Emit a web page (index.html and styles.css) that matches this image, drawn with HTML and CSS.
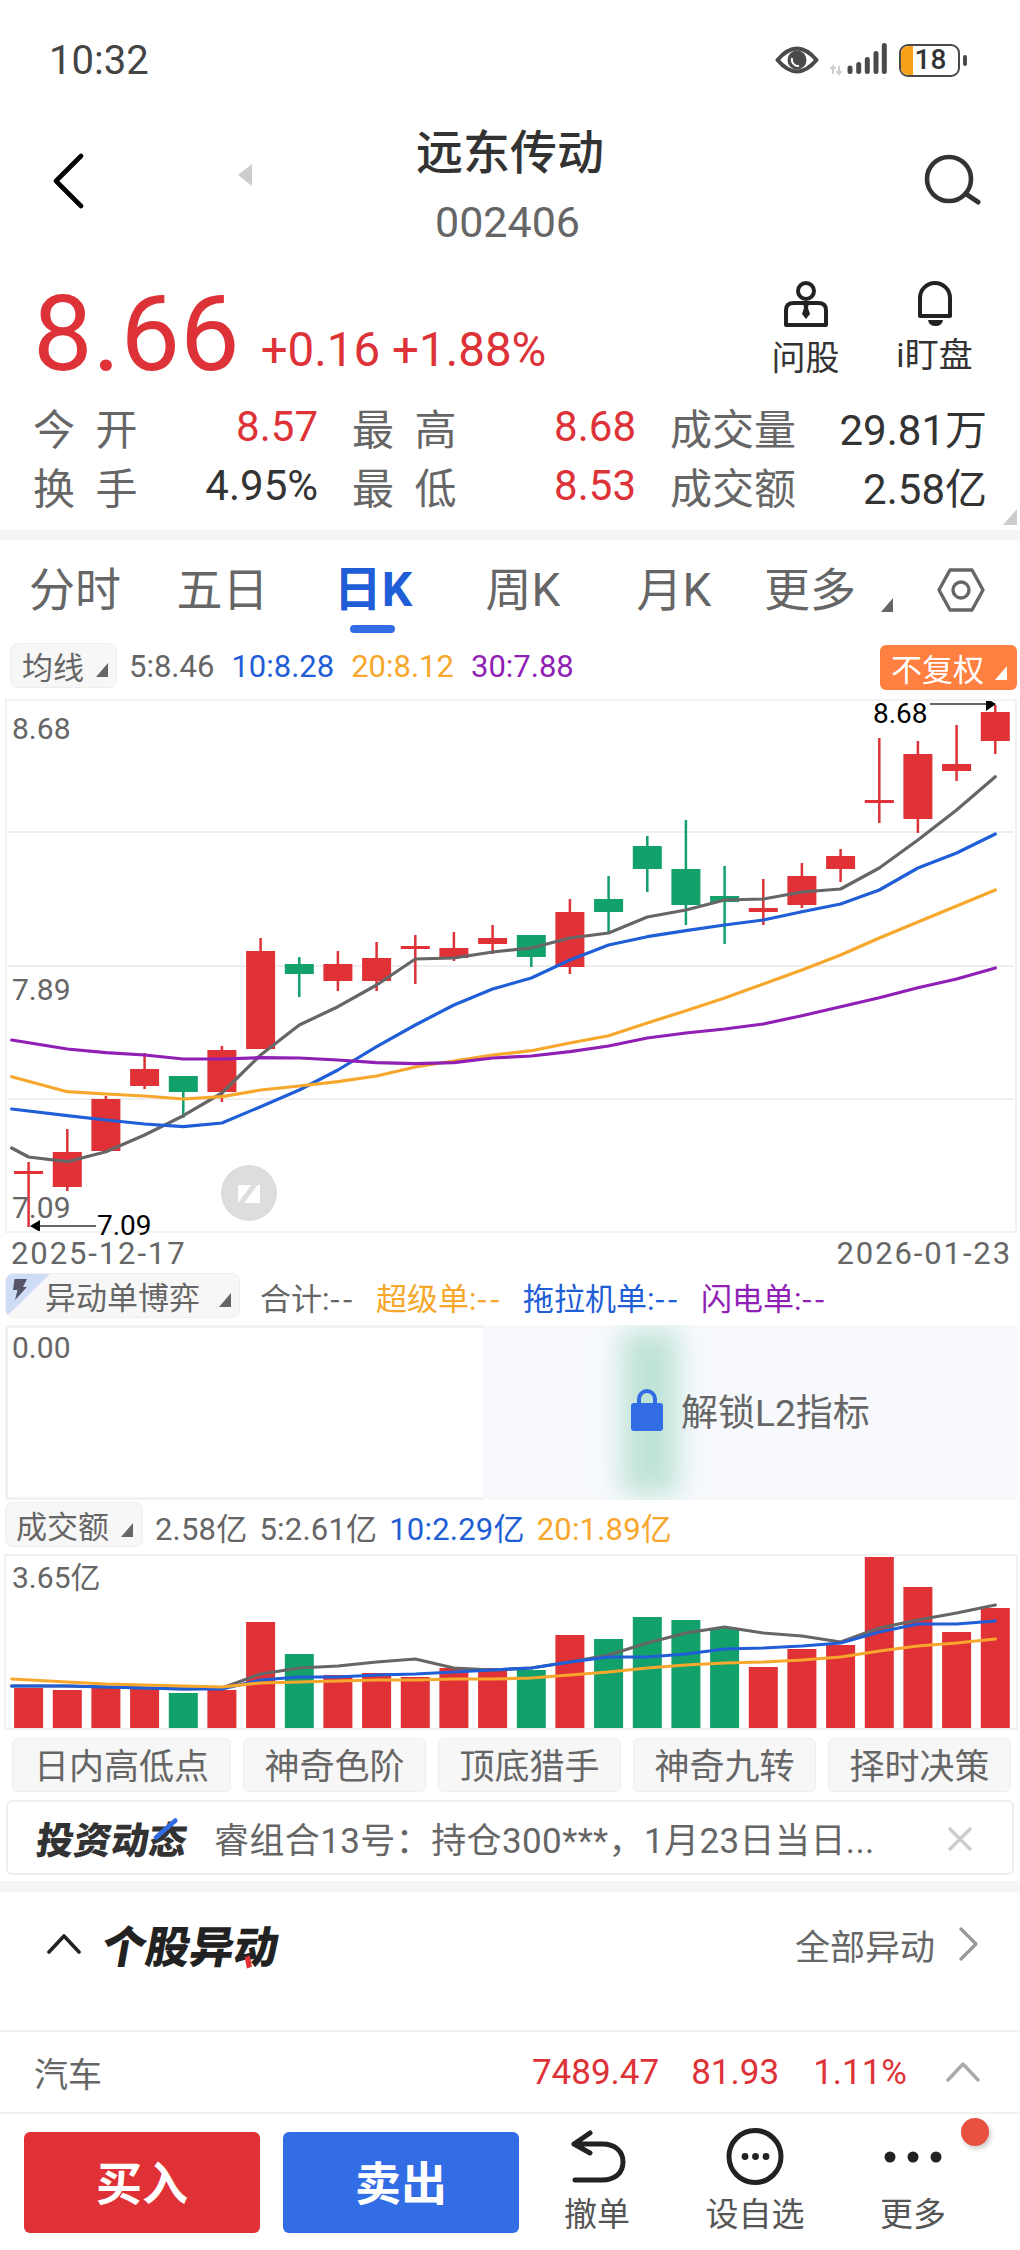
FILE: index.html
```html
<!DOCTYPE html>
<html lang="zh">
<head>
<meta charset="utf-8">
<title>远东传动 002406</title>
<link rel="stylesheet" href="styles.css">
</head>
<body>
<div class="app">
  <div class="status">
    <span class="time">10:32</span>
    <div class="status-icons">
      <svg class="ico-eye" viewBox="0 0 44 30" width="44" height="30"><path d="M2.5 15Q22-8 41.500 15Q22 38 2.500 15Z" fill="none" stroke="#4a4a4a" stroke-width="4" stroke-linejoin="round"/><circle cx="22" cy="15" r="9.500" fill="#4a4a4a"/><path d="M17 13a6.500 6.500 0 0 0 7 8" fill="none" stroke="#fff" stroke-width="2"/></svg>
      <svg class="ico-signal" viewBox="0 0 60 36" width="60" height="36"><path d="M5 32V24M2.500 27L5 24L7.500 27M11 24V32M8.500 29L11 32L13.500 29" fill="none" stroke="#cfcfcf" stroke-width="2"/><path d="M22 26V29.500M30.700 22.500V29.500M39.300 17.500V29.500M48 11.500V29.500M56.300 3.500V29.500" stroke="#4a4a4a" stroke-width="5" stroke-linecap="round"/></svg>
      <div class="battery"><span class="battery-fill"></span><span class="battery-num">18</span></div>
      <span class="battery-nub"></span>
    </div>
  </div>

  <header class="nav">
    <svg class="back" viewBox="0 0 36 56" width="36" height="56"><path d="M31 3L6 28L31 53" fill="none" stroke="#000" stroke-width="4.600" stroke-linecap="round" stroke-linejoin="round"/></svg>
    <span class="prev-arrow"></span>
    <div class="nav-title">
      <div class="name">远东传动</div>
      <div class="code">002406</div>
    </div>
    <svg class="search" viewBox="0 0 58 52" width="58" height="52"><circle cx="25" cy="25" r="22" fill="none" stroke="#333" stroke-width="4.600"/><path d="M42 40L54 48" stroke="#333" stroke-width="5" stroke-linecap="round"/></svg>
  </header>

  <section class="quote">
    <span class="price">8.66</span>
    <span class="change">+0.16 +1.88%</span>
    <div class="quick">
      <div class="quick-item">
        <svg viewBox="0 0 44 46" width="44" height="46"><circle cx="22" cy="10" r="8" fill="none" stroke="#222" stroke-width="4"/><path d="M2 44V29Q2 22 10 22H34Q42 22 42 29V44Z" fill="none" stroke="#222" stroke-width="4" stroke-linejoin="round"/><path d="M19 22H25L24 27L26 33L22 38L18 33L20 27Z" fill="#222"/></svg>
        <span>问股</span>
      </div>
      <div class="quick-item quick-bell">
        <svg viewBox="0 0 40 46" width="40" height="46"><path d="M5 35V17a15 15 0 0 1 30 0V35Z" fill="none" stroke="#222" stroke-width="4" stroke-linejoin="round"/><path d="M13 39H28Q27 45 20.500 45Q14 45 13 39Z" fill="#222"/></svg>
        <span>i盯盘</span>
      </div>
    </div>
  </section>

  <section class="stats">
    <div class="stat"><span class="lab">今 开</span><span class="red">8.57</span></div>
    <div class="stat"><span class="lab">最 高</span><span class="red">8.68</span></div>
    <div class="stat"><span class="lab">成交量</span><span>29.81万</span></div>
    <div class="stat"><span class="lab">换 手</span><span>4.95%</span></div>
    <div class="stat"><span class="lab">最 低</span><span class="red">8.53</span></div>
    <div class="stat"><span class="lab">成交额</span><span>2.58亿</span></div>
    <span class="corner"></span>
  </section>
  <div class="band band-a"></div>

  <nav class="tabs">
    <span class="tab">分时</span>
    <span class="tab">五日</span>
    <span class="tab active">日K</span>
    <span class="tab">周K</span>
    <span class="tab">月K</span>
    <span class="tab">更多</span>
    <span class="tri tri-more"></span>
    <svg class="hex" viewBox="0 0 48 44" width="48" height="44"><path d="M13 2H35L46 22L35 42H13L2 22Z" fill="none" stroke="#666" stroke-width="3.400" stroke-linejoin="round"/><circle cx="24" cy="22" r="8" fill="none" stroke="#666" stroke-width="3.400"/></svg>
  </nav>

  <div class="ind-row">
    <span class="chip chip-ma">均线<i class="tri"></i></span>
    <span class="val g">5:8.46</span><span class="val b">10:8.28</span><span class="val o">20:8.12</span><span class="val p">30:7.88</span>
    <span class="adj">不复权<i class="tri tri-white"></i></span>
  </div>

  <div class="chart">
    <svg class="plot" viewBox="5 699 1012 534" width="1012" height="534">
      <path class="grid" d="M8 832H1014M8 966H1014M8 1099H1014"/>
      <path class="wick-r" d="M28.600 1162V1227M67.300 1129V1191M105.900 1096V1152M144.600 1053V1089M221.900 1046V1102M260.600 938V1049M337.900 951V991M376.600 942V991M415.300 935V984M453.900 932V961M492.600 925V954M569.900 899V974M763.300 879V925M801.900 863V908M840.600 849V882M879.300 738V823M917.900 741V833M956.600 725V781M995.300 705V754"/>
      <path class="wick-g" d="M183.300 1076V1118M299.300 957V997M531.300 935V967M608.600 876V933M647.300 836V892M685.900 820V925M724.600 866V944"/>
      <path class="body-r" d="M14.100 1171h29v3h-29zM52.800 1152h29v35h-29zM91.400 1099h29v52h-29zM130.100 1069h29v17h-29zM207.400 1050h29v42h-29zM246.100 951h29v98h-29zM323.400 964h29v17h-29zM362.100 958h29v23h-29zM400.800 946h29v3h-29zM439.400 948h29v10h-29zM478.100 938h29v6h-29zM555.400 912h29v55h-29zM748.800 908h29v4h-29zM787.400 876h29v29h-29zM826.100 856h29v13h-29zM864.800 800h29v3h-29zM903.400 754h29v65h-29zM942.100 764h29v7h-29zM980.800 712h29v29h-29z"/>
      <path class="body-g" d="M168.800 1076h29v16h-29zM284.800 964h29v10h-29zM516.800 935h29v22h-29zM594.100 899h29v13h-29zM632.800 846h29v23h-29zM671.400 869h29v36h-29zM710.100 896h29v6h-29z"/>
      <polyline class="ma ma5" points="11.700,1148 28.600,1157 67.300,1161.700 105.900,1151.700 144.600,1135 183.300,1115.700 221.900,1093 260.600,1055 299.300,1025 337.900,1006.700 376.600,985 415.300,959 453.900,958 492.600,952 531.300,948 569.900,938 608.600,933 647.300,917 685.900,910 724.600,900 763.300,899 801.900,892 840.600,889 879.300,868 917.900,840 956.600,810 995.300,776.700"/>
      <polyline class="ma ma10" points="11.700,1109 67.300,1115.700 105.900,1120 144.600,1124 183.300,1126.700 221.900,1123 260.600,1106.700 299.300,1090 337.900,1070 376.600,1046.700 415.300,1025 453.900,1005 492.600,989 531.300,978 569.900,960 608.600,945 647.300,936.700 685.900,930.700 724.600,925 763.300,920 801.900,911.700 840.600,904 879.300,890 917.900,868 956.600,853 995.300,834"/>
      <polyline class="ma ma20" points="11.700,1076.700 67.300,1091.700 105.900,1094 144.600,1096 183.300,1099 221.900,1096.700 260.600,1090 299.300,1086 337.900,1081.700 376.600,1076 415.300,1067 453.900,1061 492.600,1055 531.300,1050.700 569.900,1043 608.600,1035.700 647.300,1023 685.900,1010.700 724.600,998 763.300,984 801.900,970 840.600,955 879.300,938 917.900,922 956.600,906 995.300,890"/>
      <polyline class="ma ma30" points="11.700,1040 67.300,1049 105.900,1052.700 144.600,1055 183.300,1059 221.900,1059 260.600,1057.700 299.300,1058 337.900,1060 376.600,1062.700 415.300,1063.700 453.900,1062.700 492.600,1058 531.300,1056 569.900,1051.700 608.600,1046 647.300,1038 685.900,1033 724.600,1029 763.300,1024 801.900,1015.700 840.600,1006.700 879.300,997.700 917.900,987.700 956.600,979 995.300,968"/>
      <path class="mark-line" d="M930 704H988M39 1226H96"/>
      <path class="mark-head" d="M986 698L996 704L986 711ZM40 1220L30 1226L40 1232Z"/>
    </svg>
    <span class="axis axis-hi">8.68</span>
    <span class="axis axis-mid">7.89</span>
    <span class="axis axis-lo">7.09</span>
    <span class="mark mark-hi">8.68</span>
    <span class="mark mark-lo">7.09</span>
    <svg class="eraser" viewBox="0 0 56 56" width="56" height="56"><circle cx="28" cy="28" r="28" fill="#ddd"/><path d="M17 20H39V38H17Z" fill="#fff"/><path d="M34 15L38 18L21 41L17 38Z" fill="#ddd"/></svg>
  </div>

  <div class="dates"><span>2025-12-17</span><span>2026-01-23</span></div>

  <div class="ind-row row-l2">
    <span class="chip chip-l2">
      <svg class="bolt" viewBox="0 0 44 43" width="44" height="43"><path d="M0 0H44L0 43Z" fill="#cfdcf5"/><path d="M8.500 5H21L17 13H21L9 26L11.500 16H7Z" fill="#556"/></svg>
      异动单博弈<i class="tri"></i>
    </span>
    <span class="val g">合计:<span class="dash">--</span></span><span class="val o">超级单:<span class="dash">--</span></span><span class="val b">拖拉机单:<span class="dash">--</span></span><span class="val p">闪电单:<span class="dash">--</span></span>
  </div>

  <div class="l2-panel">
    <span class="axis axis-zero">0.00</span>
    <div class="l2-lock">
      <span class="glow"></span>
      <svg viewBox="0 0 32 42" width="32" height="42"><path d="M8 18V10a8 8 0 0 1 16 0V18" fill="none" stroke="#336de6" stroke-width="4"/><rect x="0" y="14" width="32" height="28" rx="3" fill="#336de6"/></svg>
      <span class="l2-text">解锁L2指标</span>
    </div>
  </div>

  <div class="ind-row row-vol">
    <span class="chip chip-vol">成交额<i class="tri"></i></span>
    <span class="val g">2.58亿</span><span class="val g">5:2.61亿</span><span class="val b">10:2.29亿</span><span class="val o">20:1.89亿</span>
  </div>

  <div class="vol">
    <svg class="plot" viewBox="5 1555 1012 174" width="1012" height="174">
      <path class="body-r" d="M14.100 1688h29v40h-29zM52.800 1690h29v38h-29zM91.400 1688h29v40h-29zM130.100 1689h29v39h-29zM207.400 1690h29v38h-29zM246.100 1622h29v106h-29zM323.400 1675h29v53h-29zM362.100 1673h29v55h-29zM400.800 1677h29v51h-29zM439.400 1668h29v60h-29zM478.100 1668h29v60h-29zM555.400 1635h29v93h-29zM748.800 1667h29v61h-29zM787.400 1649h29v79h-29zM826.100 1645h29v83h-29zM864.800 1557h29v171h-29zM903.400 1587h29v141h-29zM942.100 1632h29v96h-29zM980.800 1608h29v120h-29z"/>
      <path class="body-g" d="M168.800 1693h29v35h-29zM284.800 1654h29v74h-29zM516.800 1670h29v58h-29zM594.100 1639h29v89h-29zM632.800 1617h29v111h-29zM671.400 1620h29v108h-29zM710.100 1628h29v100h-29z"/>
      <polyline class="ma ma5" points="11.700,1686 67.300,1686 105.900,1687 144.600,1688 183.300,1689 221.900,1688 260.600,1674 299.300,1668 337.900,1666 376.600,1662 415.300,1659 453.900,1668 492.600,1670 531.300,1668 569.900,1662 608.600,1655 647.300,1643 685.900,1633 724.600,1627 763.300,1633 801.900,1636 840.600,1642 879.300,1628 917.900,1620 956.600,1613 995.300,1605"/>
      <polyline class="ma ma10" points="11.700,1686 67.300,1686 105.900,1687 144.600,1688 183.300,1689 221.900,1689 260.600,1680 299.300,1677 337.900,1677 376.600,1675 415.300,1674 453.900,1672 492.600,1670 531.300,1668 569.900,1662 608.600,1657 647.300,1657 685.900,1654 724.600,1649 763.300,1648 801.900,1646 840.600,1643 879.300,1632 917.900,1624 956.600,1624 995.300,1621"/>
      <polyline class="ma ma20" points="11.700,1679 67.300,1682 105.900,1684 144.600,1685 183.300,1686 221.900,1687 260.600,1683 299.300,1682 337.900,1681 376.600,1680 415.300,1680 453.900,1679 492.600,1679 531.300,1678 569.900,1675 608.600,1672 647.300,1668 685.900,1665 724.600,1663 763.300,1662 801.900,1660 840.600,1657 879.300,1651 917.900,1646 956.600,1643 995.300,1639"/>
    </svg>
    <span class="axis axis-vol">3.65亿</span>
  </div>

  <div class="tools">
    <span class="tool tool-wide">日内高低点</span>
    <span class="tool">神奇色阶</span>
    <span class="tool">顶底猎手</span>
    <span class="tool">神奇九转</span>
    <span class="tool">择时决策</span>
  </div>

  <div class="news">
    <span class="news-logo">投资动态</span>
    <span class="news-text">睿组合13号：持仓300***，1月23日当日...</span>
    <svg class="news-x" viewBox="0 0 26 26" width="26" height="26"><path d="M2 2L24 24M24 2L2 24" stroke="#ccc" stroke-width="3.400"/></svg>
  </div>
  <div class="band band-b"></div>

  <div class="sec-head">
    <svg viewBox="0 0 34 20" width="34" height="20"><path d="M2 18L17 2L32 18" fill="none" stroke="#222" stroke-width="3.600" stroke-linecap="round" stroke-linejoin="round"/></svg>
    <span class="sec-title">个股异动</span>
    <span class="sec-all">全部异动</span>
    <svg viewBox="0 0 20 34" width="20" height="34"><path d="M2 2L17 17L2 32" fill="none" stroke="#999" stroke-width="3.200" stroke-linecap="round" stroke-linejoin="round"/></svg>
  </div>

  <div class="sector">
    <span class="sector-name">汽车</span>
    <span class="sector-a red">7489.47</span>
    <span class="sector-b red">81.93</span>
    <span class="sector-c red">1.11%</span>
    <svg viewBox="0 0 34 20" width="34" height="20"><path d="M2 18L17 2L32 18" fill="none" stroke="#aaa" stroke-width="3.400" stroke-linecap="round" stroke-linejoin="round"/></svg>
  </div>

  <footer class="bottom">
    <span class="btn btn-buy">买入</span>
    <span class="btn btn-sell">卖出</span>
    <div class="act act-a">
      <svg viewBox="0 0 60 60" width="60" height="60"><path d="M23 7L7 18L23 27M7 18H35C49 18 56 26 56 36C56 47 48 54 35 54H8" fill="none" stroke="#222" stroke-width="5" stroke-linecap="round" stroke-linejoin="round"/></svg>
      <span>撤单</span>
    </div>
    <div class="act act-b">
      <svg viewBox="0 0 60 60" width="60" height="60"><circle cx="30" cy="30.500" r="26" fill="none" stroke="#222" stroke-width="5"/><circle cx="20" cy="30.500" r="3.400" fill="#222"/><circle cx="30.500" cy="30.500" r="3.400" fill="#222"/><circle cx="41" cy="30.500" r="3.400" fill="#222"/></svg>
      <span>设自选</span>
    </div>
    <div class="act act-c">
      <svg viewBox="0 0 60 60" width="60" height="60"><circle cx="7" cy="31" r="5.500" fill="#222"/><circle cx="30" cy="31" r="5.500" fill="#222"/><circle cx="53" cy="31" r="5.500" fill="#222"/></svg>
      <span>更多</span>
    </div>
    <span class="red-dot"></span>
  </footer>
</div>
</body>
</html>
```
FILE: styles.css
```css
* { box-sizing: border-box; }
html, body { margin: 0; padding: 0; background: #fff; }
body { font-family: Roboto, "Noto Sans CJK SC", sans-serif; color: #333; }
.app { width: 1020px; height: 2250px; overflow: hidden; position: relative; background: #fff; }
.red { color: #dd3237; }
.g { color: #666; }
.b { color: #1f5ed6; }
.o { color: #f7a72c; }
.p { color: #8f1fb5; }

/* status bar */
.status { height: 120px; display: flex; align-items: center; justify-content: space-between; padding: 0 53px 0 49px; }
.time { font-size: 40px; color: #444; }
.status-icons { display: flex; align-items: center; }
.ico-eye { margin-right: 9px; }
.ico-signal { margin-right: 11px; }
.battery { position: relative; width: 61px; height: 33px; border: 2.5px solid #4a4a4a; border-radius: 9px; overflow: hidden; display: flex; align-items: center; justify-content: center; }
.battery-fill { position: absolute; left: 0; top: 0; bottom: 0; width: 12px; background: #f9a01b; }
.battery-num { position: relative; font-size: 28px; line-height: 1; color: #333; margin-left: 2px; font-weight: 500; }
.battery-nub { width: 4px; height: 11px; margin-left: 3px; background: #4a4a4a; border-radius: 2px; }

/* nav */
.nav { position: relative; height: 150px; }
.nav-title { text-align: center; }
.name { font-size: 47px; line-height: 66px; color: #333; font-weight: 500; }
.code { font-size: 43px; line-height: 56px; margin-top: 8px; padding-right: 5px; color: #666; }
.back { position: absolute; left: 50px; top: 33px; }
.prev-arrow { position: absolute; left: 238px; top: 44px; border-style: solid; border-width: 11px 14px 11px 0; border-color: transparent #ccc transparent transparent; }
.search { position: absolute; left: 924px; top: 34px; }

/* quote */
.quote { height: 127px; position: relative; display: flex; align-items: flex-start; padding-left: 33px; }
.price { font-size: 106px; line-height: 128px; color: #dd3237; }
.change { font-size: 47.500px; line-height: 56px; color: #dd3237; margin: 52px 0 0 21px; }
.quick { position: absolute; left: 753px; top: 11px; display: flex; }
.quick-item { width: 105px; margin-right: 24px; display: flex; flex-direction: column; align-items: center; font-size: 34px; color: #333; }
.quick-item span { line-height: 46px; margin-top: 8px; }
.quick-bell span { margin-top: 5px; }

/* stats */
.stats { position: relative; height: 118px; padding: 0 33px; display: grid; grid-template-columns: 285px 284px 317px; column-gap: 34px; grid-auto-rows: 59px; font-size: 42px; color: #333; }
.stat { display: flex; justify-content: space-between; align-items: center; }
.lab { color: #666; font-size: 42px; word-spacing: 10px; }
.corner { position: absolute; right: 3px; bottom: -10px; border-style: solid; border-width: 0 0 16px 14px; border-color: transparent transparent #ccc transparent; }
.band { background: #f5f5f5; }
.band-a { height: 10px; margin-top: 15px; }
.band-b { height: 11px; margin-top: 6px; }

/* tabs */
.tabs { height: 100px; position: relative; display: grid; grid-template-columns: 150px 145px 156px 144px 158px 114px; align-items: center; font-size: 46px; color: #666; }
.tab { text-align: center; line-height: 100px; }
.active { color: #1f5ed6; font-weight: 700; font-size: 48px; }
.active::after { content: ""; position: absolute; left: 350px; top: 85px; width: 45px; height: 8px; background: #336de6; border-radius: 4px; }
.tri-more { position: absolute; left: 881px; top: 58px; }
.hex { position: absolute; left: 937px; top: 28px; }
.tri { display: inline-block; border-style: solid; border-width: 0 0 14px 12px; border-color: transparent transparent #666 transparent; }
.tri-white { border-color: transparent transparent #fff transparent; }

/* indicator rows */
.ind-row { height: 59px; display: flex; align-items: center; gap: 17px; padding-left: 10px; font-size: 31px; position: relative; padding-bottom: 9px; }
.val { padding-top: 3px; }
.dash { font-family: "Noto Sans CJK SC", sans-serif; letter-spacing: 2px; }
.chip { height: 45px; display: flex; align-items: center; background: #f7f7f7; border: 1px solid #eee; border-radius: 8px; color: #666; position: relative; }
.chip-ma { width: 107px; padding-left: 11px; margin-right: -5px; }
.chip .tri { margin-left: 12px; margin-top: 10px; }
.adj { position: absolute; left: 880px; top: 5px; width: 137px; height: 45px; background: #ff8040; color: #fff; border-radius: 6px; display: flex; align-items: center; padding-left: 11px; font-size: 31px; }
.adj .tri { margin-left: 11px; margin-top: 10px; }

/* chart */
.chart { position: relative; margin-left: 5px; width: 1012px; height: 534px; outline: 2px solid #f2f2f2; outline-offset: -2px; }
.plot { display: block; }
.grid { stroke: #eee; stroke-width: 2; fill: none; }
.wick-r { stroke: #dd3237; stroke-width: 2.500; fill: none; }
.wick-g { stroke: #12a06b; stroke-width: 2.500; fill: none; }
.body-r { fill: #e03136; }
.body-g { fill: #12a06b; }
.ma { fill: none; stroke-width: 3.200; stroke-linejoin: round; stroke-linecap: round; }
.ma5 { stroke: #666; }
.ma10 { stroke: #1f5ed6; }
.ma20 { stroke: #f7a72c; }
.ma30 { stroke: #8f1fb5; }
.mark-line { stroke: #666; stroke-width: 2; fill: none; }
.mark-head { fill: #000; }
.axis { position: absolute; left: 7px; font-size: 30px; line-height: 36px; color: #666; }
.axis-hi { top: 12px; }
.axis-mid { top: 273px; }
.axis-lo { top: 491px; }
.mark { position: absolute; font-size: 28px; line-height: 30px; color: #000; }
.mark-hi { left: 868px; top: 0; }
.mark-lo { left: 92px; top: 512px; }
.eraser { position: absolute; left: 216px; top: 466px; }

.dates { height: 39px; display: flex; justify-content: space-between; align-items: center; padding: 2px 8px 0 11px; font-size: 31px; letter-spacing: 1.900px; color: #666; }

/* L2 row */
.row-l2 { height: 53px; padding-left: 5px; padding-bottom: 7px; gap: 21px; }
.chip-l2 { width: 235px; padding-left: 39px; margin-right: -1px; overflow: hidden; }
.chip-l2 .tri { margin-left: 19px; }
.bolt { position: absolute; left: 0; top: 0; }
.l2-panel { position: relative; margin-left: 5px; width: 1012px; height: 175px; border: 3px solid #f2f2f2; }
.axis-zero { top: 2px; left: 4px; }
.l2-lock { position: absolute; left: 475px; top: -3px; right: -3px; bottom: -3px; background: #f7f9fd; display: flex; align-items: center; padding: 0 0 6px 148px; overflow: hidden; }
.glow { position: absolute; left: 139px; top: 6px; bottom: 6px; width: 56px; background: #bfe3d7; filter: blur(13px); }
.l2-lock svg { position: relative; }
.l2-text { position: relative; margin-left: 18px; font-size: 37px; color: #666; }

.row-vol { height: 55px; padding-left: 5px; padding-bottom: 6px; gap: 12px; letter-spacing: .2px; }
.chip-vol { width: 138px; padding-left: 10px; margin-right: 0; letter-spacing: 0; }
.vol { position: relative; margin-left: 5px; width: 1012px; height: 174px; outline: 2px solid #f2f2f2; outline-offset: -1px; }
.axis-vol { left: 7px; top: 5px; }

/* tools */
.tools { display: flex; gap: 12px; padding: 9px 0 0 12px; height: 63px; }
.tool { width: 183px; height: 54px; padding-bottom: 3px; display: flex; align-items: center; justify-content: center; background: #f7f7f7; border: 1px solid #eee; border-radius: 6px; font-size: 35px; color: #666; }
.tool-wide { width: 219px; }

/* news */
.news { margin: 8px 0 0 6px; width: 1008px; height: 75px; border: 2px solid #eee; border-radius: 6px; display: flex; align-items: center; padding-left: 29px; position: relative; }
.news-logo { display: block; font-size: 37.500px; font-weight: 900; color: #333; position: relative; transform: skewX(-8deg); }
.news-logo::after { content: ""; position: absolute; left: 125px; top: 5px; width: 5px; height: 28px; background: #336de6; transform: rotate(45deg); border-radius: 2px; }
.news-text { margin-left: 27px; font-size: 35px; letter-spacing: .4px; color: #666; white-space: nowrap; }
.news-x { position: absolute; left: 939px; top: 24px; }

/* section */
.sec-head { height: 140px; display: flex; align-items: center; padding: 0 41px 34px 47px; border-bottom: 2px solid #f2f2f2; }
.sec-title { display: block; font-size: 44px; font-weight: 900; color: #222; margin-left: 22px; position: relative; transform: skewX(-10deg); }
.sec-title::after { content: ""; position: absolute; left: 146px; bottom: 8px; width: 5px; height: 12px; background: #e03136; transform: rotate(-20deg); }
.sec-all { margin-left: auto; font-size: 35px; color: #666; margin-right: 24px; }

.sector { height: 82px; display: flex; align-items: center; padding: 0 40px 0 34px; border-bottom: 2px solid #f2f2f2; font-size: 35px; }
.sector-name { color: #666; margin-right: auto; font-size: 34px; }
.sector-b { margin-left: 32px; }
.sector-c { margin-left: 34px; }
.sector svg { margin-left: 39px; }

/* bottom */
.bottom { position: relative; height: 136px; display: flex; padding: 18px 0 0 24px; gap: 23px; }
.btn { width: 236px; height: 101px; padding-bottom: 6px; border-radius: 6px; display: flex; align-items: center; justify-content: center; font-size: 46px; font-weight: 700; color: #fff; }
.btn-buy { background: #e03136; }
.btn-sell { background: #336de6; }
.act { position: absolute; top: 12px; width: 120px; display: flex; flex-direction: column; align-items: center; font-size: 33px; color: #555; }
.act span { line-height: 40px; margin-top: 9px; }
.act-a { left: 537px; }
.act-b { left: 695px; }
.act-c { left: 853px; }
.red-dot { position: absolute; left: 961px; top: 4px; width: 28px; height: 28px; border-radius: 50%; background: #e8503f; box-shadow: 2px 3px 5px rgba(0,0,0,.2); }
```
